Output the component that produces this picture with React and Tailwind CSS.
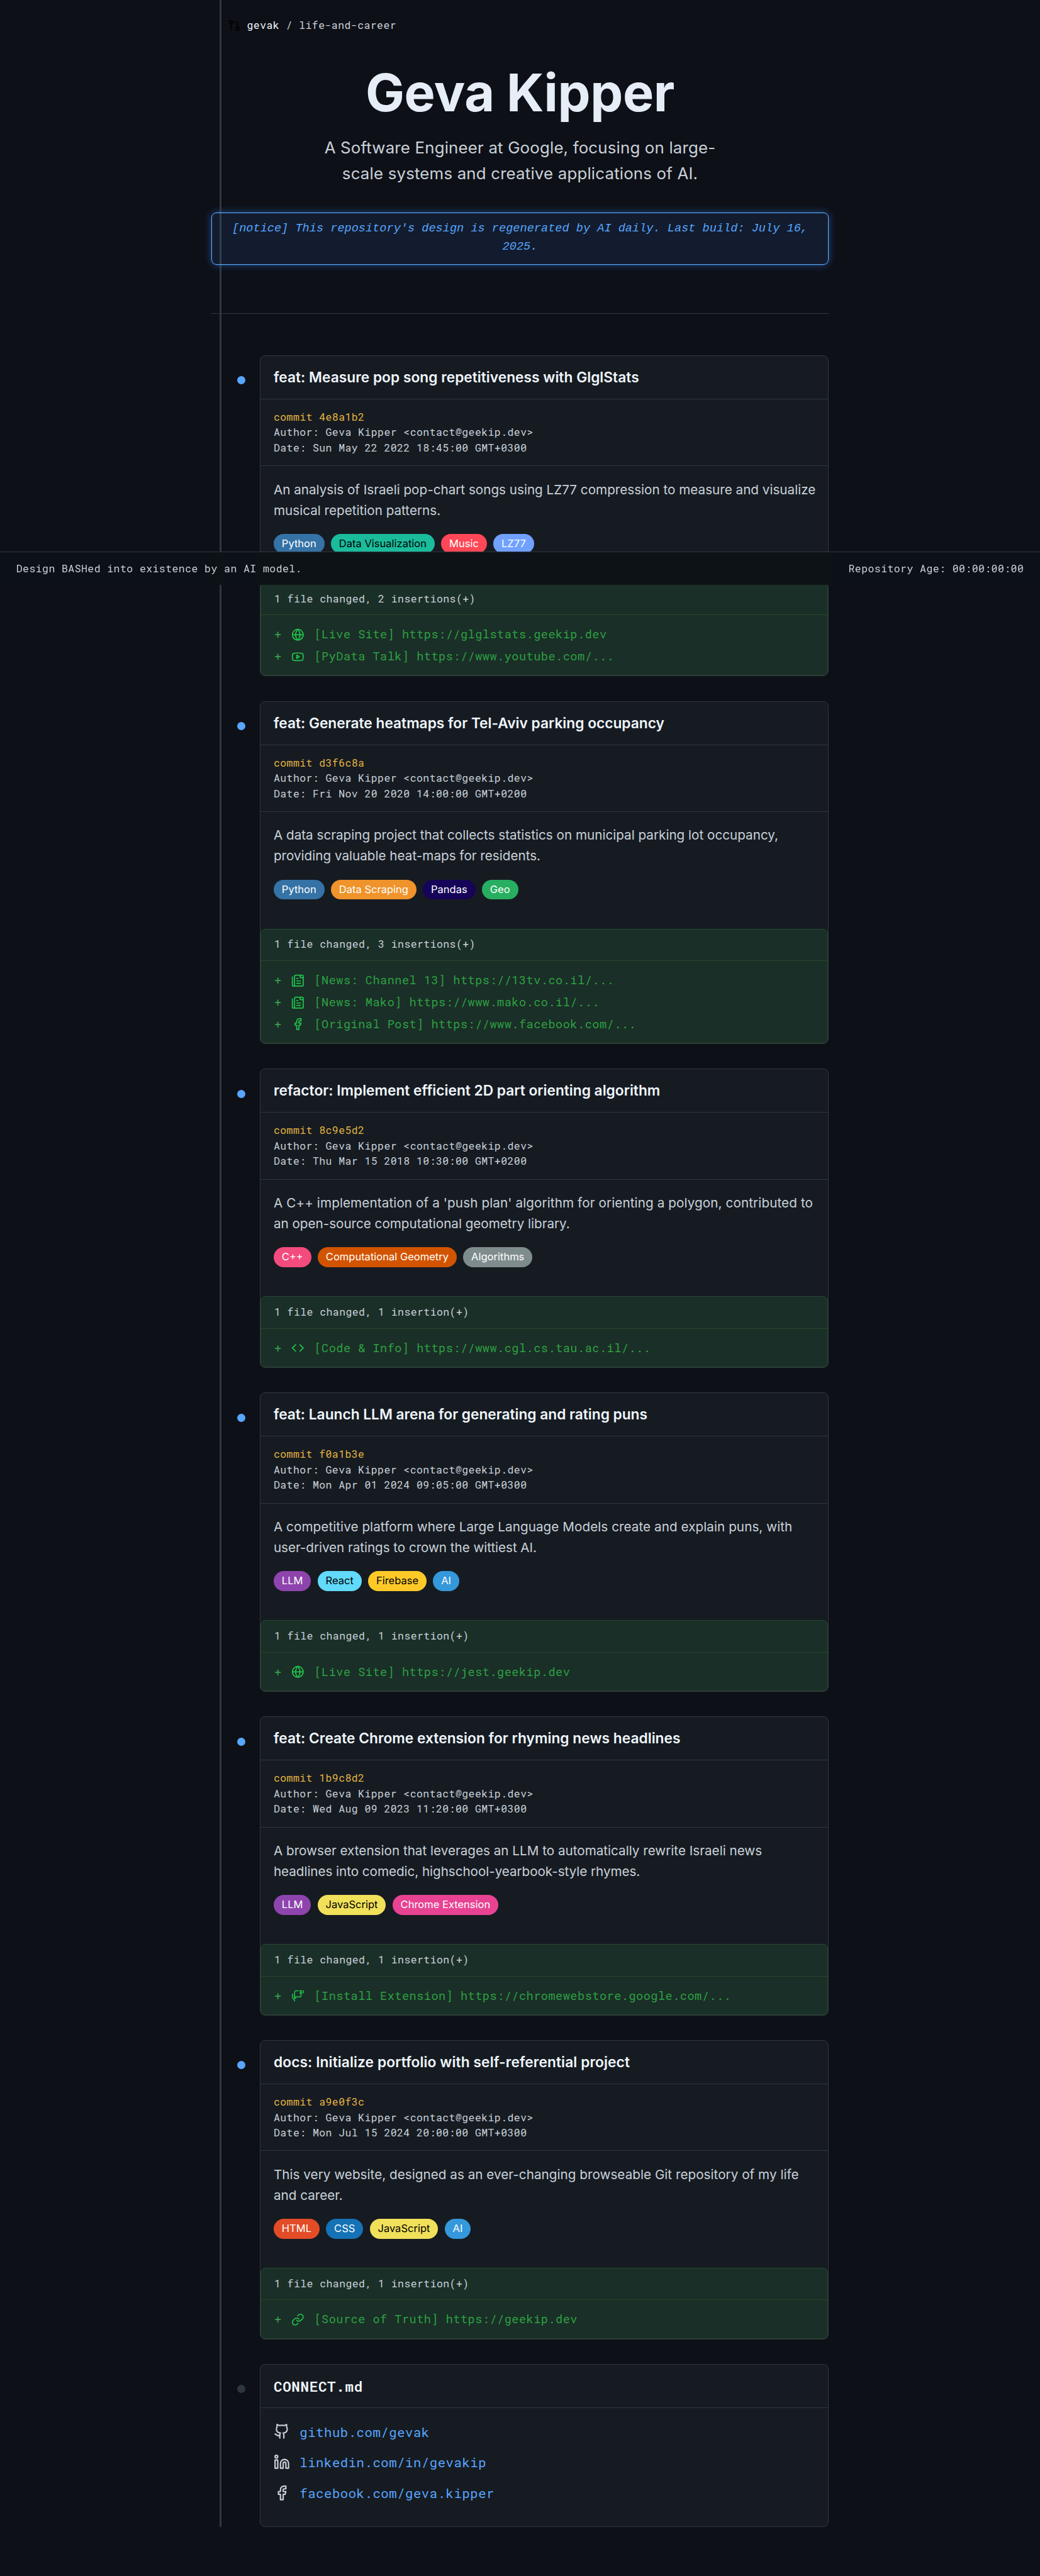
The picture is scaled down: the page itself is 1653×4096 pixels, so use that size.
import { Globe, Youtube, Facebook, Code, Link, Github, Linkedin, GitPullRequest } from "lucide-react";

function NewsIcon(props) {
  return (
    <svg viewBox="0 0 24 24" fill="none" stroke="currentColor" strokeWidth="2" strokeLinecap="round" strokeLinejoin="round" {...props}>
      <path d="M4 22h16a2 2 0 0 0 2-2V4a2 2 0 0 0-2-2H8a2 2 0 0 0-2 2v16a2 2 0 0 1-4 0V5" />
      <path d="M16.5 2v4.5H22" />
      <path d="M10 8h2M10 12.5h7M10 17h7" />
    </svg>
  );
}

function ExtensionIcon(props) {
  return (
    <svg viewBox="0 0 24 24" fill="none" stroke="currentColor" strokeWidth="1.8" strokeLinecap="round" strokeLinejoin="round" {...props}>
      <path d="M13 3H8.5a2.5 2.5 0 0 0-2.5 2.5v8.7h10a1.8 1.8 0 0 0 1.8-1.8V8" />
      <path d="M2.3 9v6.4a3 3 0 0 0 2.4 2.9c.9.3 1.2 1 1.2 1.8V22" />
      <path d="M4.5 18.3l3.3-3.5M6 14.2l2.2 2.3" />
      <path d="M16 2.5l1.5 2.5-1.5 2.5M19 2.5l-1.5 2.5L19 7.5" />
      <path d="M21.5 2.5c1.3 1.5 1.3 2.8-.2 4.5" />
    </svg>
  );
}

const commits = [
  {
    title: "feat: Measure pop song repetitiveness with GlglStats",
    titleTrack: "tracking-[0.02px]",
    hash: "4e8a1b2",
    date: "Sun May 22 2022 18:45:00 GMT+0300",
    desc: [
      ["An analysis of Israeli pop-chart songs using LZ77 compression to measure and visualize", "tracking-normal"],
      ["musical repetition patterns.", "tracking-normal"],
    ],
    tags: [["Python", "bg-[#3572a5] text-white"], ["Data Visualization", "bg-[#1abc9c] text-black"], ["Music", "bg-[#ff4757] text-white"], ["LZ77", "bg-[#70a1ff] text-white"]],
    links: [[Globe, "[Live Site] https://glglstats.geekip.dev"], [Youtube, "[PyData Talk] https://www.youtube.com/..."]],
  },
  {
    title: "feat: Generate heatmaps for Tel-Aviv parking occupancy",
    titleTrack: "tracking-normal",
    hash: "d3f6c8a",
    date: "Fri Nov 20 2020 14:00:00 GMT+0200",
    desc: [
      ["A data scraping project that collects statistics on municipal parking lot occupancy,", "tracking-normal"],
      ["providing valuable heat-maps for residents.", "tracking-normal"],
    ],
    tags: [["Python", "bg-[#3572a5] text-white"], ["Data Scraping", "bg-[#f0932b] text-white"], ["Pandas", "bg-[#150458] text-white"], ["Geo", "bg-[#27ae60] text-white"]],
    links: [[NewsIcon, "[News: Channel 13] https://13tv.co.il/..."], [NewsIcon, "[News: Mako] https://www.mako.co.il/..."], [Facebook, "[Original Post] https://www.facebook.com/..."]],
  },
  {
    title: "refactor: Implement efficient 2D part orienting algorithm",
    titleTrack: "tracking-normal",
    hash: "8c9e5d2",
    date: "Thu Mar 15 2018 10:30:00 GMT+0200",
    desc: [
      ["A C++ implementation of a 'push plan' algorithm for orienting a polygon, contributed to", "tracking-[0.1px]"],
      ["an open-source computational geometry library.", "tracking-[-0.02px]"],
    ],
    tags: [["C++", "bg-[#f34b7d] text-white"], ["Computational Geometry", "bg-[#d35400] text-white"], ["Algorithms", "bg-[#7f8c8d] text-white"]],
    links: [[Code, "[Code & Info] https://www.cgl.cs.tau.ac.il/..."]],
  },
  {
    title: "feat: Launch LLM arena for generating and rating puns",
    titleTrack: "tracking-[-0.02px]",
    hash: "f0a1b3e",
    date: "Mon Apr 01 2024 09:05:00 GMT+0300",
    desc: [
      ["A competitive platform where Large Language Models create and explain puns, with", "tracking-[0.06px]"],
      ["user-driven ratings to crown the wittiest AI.", "tracking-[-0.05px]"],
    ],
    tags: [["LLM", "bg-[#8e44ad] text-white"], ["React", "bg-[#61dafb] text-black"], ["Firebase", "bg-[#ffca28] text-black"], ["AI", "bg-[#3498db] text-white"]],
    links: [[Globe, "[Live Site] https://jest.geekip.dev"]],
  },
  {
    title: "feat: Create Chrome extension for rhyming news headlines",
    titleTrack: "tracking-[0.03px]",
    hash: "1b9c8d2",
    date: "Wed Aug 09 2023 11:20:00 GMT+0300",
    desc: [
      ["A browser extension that leverages an LLM to automatically rewrite Israeli news", "tracking-normal"],
      ["headlines into comedic, highschool-yearbook-style rhymes.", "tracking-[-0.05px]"],
    ],
    tags: [["LLM", "bg-[#8e44ad] text-white"], ["JavaScript", "bg-[#f1e05a] text-black"], ["Chrome Extension", "bg-[#e84393] text-white"]],
    links: [[ExtensionIcon, "[Install Extension] https://chromewebstore.google.com/..."]],
  },
  {
    title: "docs: Initialize portfolio with self-referential project",
    titleTrack: "tracking-[0.1px]",
    hash: "a9e0f3c",
    date: "Mon Jul 15 2024 20:00:00 GMT+0300",
    desc: [
      ["This very website, designed as an ever-changing browseable Git repository of my life", "tracking-[0.03px]"],
      ["and career.", "tracking-normal"],
    ],
    tags: [["HTML", "bg-[#e34c26] text-white"], ["CSS", "bg-[#1572b6] text-white"], ["JavaScript", "bg-[#f1e05a] text-black"], ["AI", "bg-[#3498db] text-white"]],
    links: [[Link, "[Source of Truth] https://geekip.dev"]],
  },
];

const contacts = [
  [Github, "github.com/gevak"],
  [Linkedin, "linkedin.com/in/gevakip"],
  [Facebook, "facebook.com/geva.kipper"],
];

const mono = "font-['Roboto_Mono','Liberation_Mono',monospace]";

function Commit({ title, titleTrack, hash, date, desc, tags, links }) {
  return (
    <article className="relative mb-[39.2px] ml-[77.5px] rounded-[8px] border border-[#30363d] bg-[#161b22]">
      <span className="absolute -left-[37.5px] top-[32.5px] size-[13px] rounded-full bg-[#58a6ff]" />
      <h2 className={`${titleTrack} h-[69px] border-b border-[#30363d] px-[20.7px] pt-[16px] text-[22.73px] font-semibold leading-[36.4px] text-[#f0f6fc]`}>{title}</h2>
      <div className={`${mono} h-[106.5px] border-b border-[#30363d] px-[20.7px] pt-[16px] text-[16.53px] leading-[24.6px] tracking-[0.41px]`}>
        <p className="text-[#e3b341]">commit {hash}</p>
        <p>Author: Geva Kipper &lt;contact@geekip.dev&gt;</p>
        <p>Date: {date}</p>
      </div>
      <div className="px-[20.7px] pb-[46.4px] pt-[20.2px]">
        {desc.map(([line, track]) => (
          <p key={line} className={`${track} whitespace-nowrap text-[20.66px] leading-[33.06px]`}>{line}</p>
        ))}
        <div className="mt-[21.2px] flex gap-[10.3px]">
          {tags.map(([label, color]) => (
            <span key={label} className={`${color} h-[31.6px] rounded-full px-[12.9px] text-[16.53px] leading-[30.5px]`}>{label}</span>
          ))}
        </div>
      </div>
      <div className={`${mono} rounded-[8px] border border-[#25472f] bg-[#1a2f27]`}>
        <p className="border-b border-[#25472f] px-[20.7px] pb-[12.3px] pt-[10.7px] text-[16.53px] leading-[26.5px] tracking-[0.41px]">
          1 file changed, {links.length} {links.length > 1 ? "insertions(+)" : "insertion(+)"}
        </p>
        <div className="px-[20.7px] pb-[11.9px] pt-[13.5px] text-[18.6px] tracking-[0.47px] text-[#2ea043]">
          {links.map(([Icon, text]) => (
            <div key={text} className="flex h-[34.87px] items-center">
              <span className="w-[27.3px] text-[#3a9e50]">+</span>
              <Icon className="mr-[15.5px] size-[20.66px] shrink-0 text-[#22c44e]" />
              <span className="whitespace-nowrap">{text}</span>
            </div>
          ))}
        </div>
      </div>
    </article>
  );
}

export default function App() {
  return (
    <div className="relative h-[4096px] overflow-hidden bg-[#0e1017] font-['Inter',sans-serif] text-[#c9d1d9]">
      <div className="relative mx-auto w-[981.5px]">
        <div className="absolute left-[13px] top-0 h-[4018px] w-[3px] bg-[#30363d]" />

        <header className="relative">
          <nav className={`${mono} flex items-center gap-[10.3px] pl-[25.8px] pt-[27.4px] text-[16.53px] leading-[26.4px] tracking-[0.42px]`}>
            <GitPullRequest className="size-[20.66px] text-black" />
            <span><b className="font-normal text-[#f0f6fc]">gevak</b> / life-and-career</span>
          </nav>
          <h1 className="mt-[44.5px] text-center text-[82.65px] font-bold leading-[99.2px] tracking-[-0.4px] text-[#e6edf6]">Geva Kipper</h1>
          <p className="mt-[16.7px] text-center text-[25.83px] leading-[41.3px] tracking-[0.18px]">
            A Software Engineer at Google, focusing on large-
            <br />
            scale systems and creative applications of AI.
          </p>
          <p className="mt-[41.4px] h-[82.7px] rounded-[8px] border-[1.5px] border-[#58a6ff] bg-[#388bfd1a] pt-[9.5px] text-center font-['Liberation_Mono',monospace] text-[18.6px] italic leading-[29.76px] text-[#58a6ff] shadow-[0_0_0_0.4px_rgba(88,166,255,0.4),0_0_13px_rgba(56,139,253,0.45)]">
            [notice] This repository's design is regenerated by AI daily. Last build: July 16,
            <br />
            2025.
          </p>
          <hr className="mb-[65.5px] mt-[77.5px] border-[#30363d]" />
        </header>

        <main>
          {commits.map((c) => (
            <Commit key={c.hash} {...c} />
          ))}

          <section className={`${mono} relative ml-[77.5px] h-[258.8px] rounded-[8px] border border-[#30363d] bg-[#161b22]`}>
            <span className="absolute -left-[37.5px] top-[32.5px] size-[13px] rounded-full bg-[#30363d]" />
            <h2 className="h-[69px] border-b border-[#30363d] px-[20.7px] pt-[16px] text-[22.73px] font-semibold leading-[36.4px] tracking-[0.56px] text-[#f0f6fc]">CONNECT.md</h2>
            <ul className="flex flex-col gap-[15.5px] px-[20.7px] pt-[21px]">
              {contacts.map(([Icon, text]) => (
                <li key={text} className="flex h-[33.06px] items-center gap-[15.5px] text-[20.66px] tracking-[0.51px] text-[#58a6ff]">
                  <Icon className="size-[25.83px] text-[#c9d1d9]" />
                  <span className="pt-[1.5px]">{text}</span>
                </li>
              ))}
            </ul>
          </section>
        </main>
      </div>

      <footer className={`${mono} absolute inset-x-0 top-[876.5px] flex h-[53.5px] items-center justify-between border-t border-[#30363d] bg-[#0d1217f2] px-[25.8px] pt-[2px] text-[16.53px] tracking-[0.41px] backdrop-blur-[6px]`}>
        <span>Design BASHed into existence by an AI model.</span>
        <span>Repository Age: 00:00:00:00</span>
      </footer>
    </div>
  );
}
